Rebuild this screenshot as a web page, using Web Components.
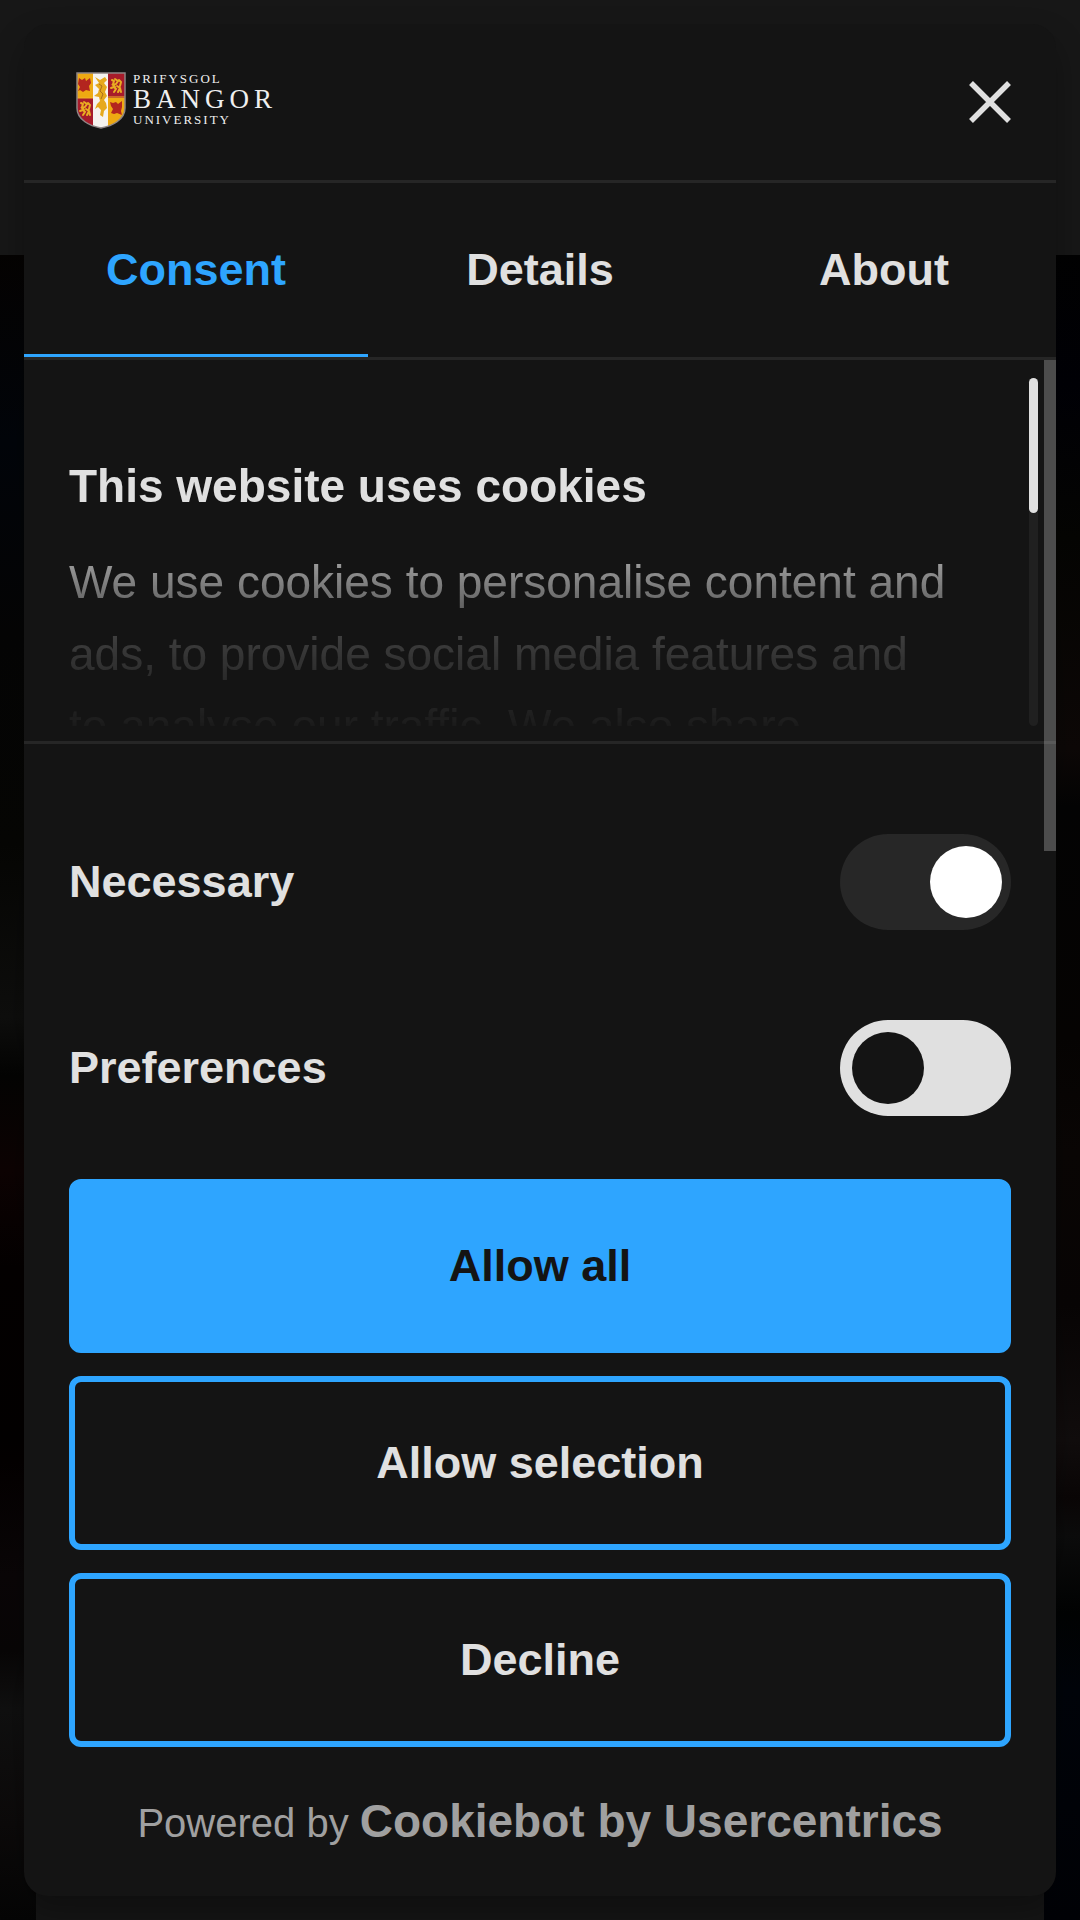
<!DOCTYPE html>
<html lang="en">
<head>
<meta charset="utf-8">
<meta name="viewport" content="width=device-width, initial-scale=1">
<title>Bangor University</title>
<style>
  html, body {
    margin: 0;
    height: 100%;
    background: #020202;
    font-family: "Liberation Sans", Arial, sans-serif;
    font-size: 45px;
    color: #e0e0e0;
  }
</style>
</head>
<body>
<page-backdrop>
  <consent-dialog>
    <consent-header slot="header"></consent-header>
    <consent-tabs slot="header"></consent-tabs>

    <consent-intro heading="This website uses cookies">We use cookies to personalise content and ads, to provide social media features and to analyse our traffic. We also share</consent-intro>
    <consent-options>
      <consent-switch label="Necessary" checked disabled></consent-switch>
      <consent-switch label="Preferences"></consent-switch>
    </consent-options>

    <consent-button slot="actions" primary>Allow all</consent-button>
    <consent-button slot="actions">Allow selection</consent-button>
    <consent-button slot="actions">Decline</consent-button>
    <powered-by slot="footer" href="#cookiebot" name="Cookiebot by Usercentrics"></powered-by>
  </consent-dialog>
</page-backdrop>

<script>
'use strict';

// dimmed page that lies under the dialog
class PageBackdrop extends HTMLElement {
  static get is() { return 'page-backdrop'; }
  constructor() {
    super();
    this.attachShadow({mode: 'open'});
    this.shadowRoot.innerHTML = `
      <style>
        :host {
          display: flex;
          flex-direction: column;
          box-sizing: border-box;
          min-height: 100vh;
          padding: 24px;
          background:
            linear-gradient(#171717, #171717) top / 100% 255px no-repeat,
            linear-gradient(#151515, #151515) bottom / calc(100% - 72px) 36px no-repeat,
            linear-gradient(#050302 13%, #02050a 23%, #050505 33%, #060604 44%, #0e0e0d 53%, #040403 56%, #0d0303 61%, #040101 66%, #030000 75%, #0a0607 82%, #080606 86%, #101010 89%, #0c0a0a 95%, #050505) left / 50% 100% no-repeat,
            linear-gradient(#020202 13%, #010106 20%, #050503 28%, #0d0807 39%, #040404 42%, #060403 54%, #0a0605 60%, #080505 68%, #110d0d 75%, #0a0606 78%, #0c0c0c 80%, #020303 84%, #01040a 88%, #010206) right / 50% 100% no-repeat;
        }
      </style>
      <slot></slot>
    `;
  }
}
customElements.define(PageBackdrop.is, PageBackdrop);

class ConsentDialog extends HTMLElement {
  static get is() { return 'consent-dialog'; }
  constructor() {
    super();
    this.attachShadow({mode: 'open'});
    this.shadowRoot.innerHTML = `
      <style>
        :host {
          display: flex;
          flex: 1;
          flex-direction: column;
          background: #141414;
          border-radius: 24px;
          box-shadow: 0 16px 32px rgba(0, 0, 0, 0.3);
          overflow: hidden;
        }
        main {
          position: relative;
          flex: 1;
        }
        .scrollbar {
          position: absolute;
          top: 0;
          right: 0;
          width: 12px;
          height: 60%;
          background: rgba(255, 255, 255, 0.24);
        }
        .actions {
          display: grid;
          gap: 23px;
          padding: 0 45px;
        }
      </style>
      <slot name="header"></slot>
      <main>
        <slot></slot>
        <div class="scrollbar"></div>
      </main>
      <div class="actions"><slot name="actions"></slot></div>
      <slot name="footer"></slot>
    `;
  }
  connectedCallback() {
    this.setAttribute('role', 'dialog');
    this.setAttribute('aria-modal', 'true');
  }
}
customElements.define(ConsentDialog.is, ConsentDialog);

class BangorLogo extends HTMLElement {
  static get is() { return 'bangor-logo'; }
  constructor() {
    super();
    this.attachShadow({mode: 'open'});
    this.shadowRoot.innerHTML = `
      <style>
        :host { display: block; }
        svg { display: block; }
        text {
          font-family: "Liberation Serif", "Times New Roman", serif;
          fill: #efefef;
        }
        .small { font-size: 13px; letter-spacing: 2px; }
        .large { font-size: 27px; letter-spacing: 5px; }
      </style>
      <svg width="204" height="60" viewBox="0 0 204 60">
        <defs>
          <clipPath id="shield"><path d="M1 1H49V36C49 48 36 54 25 56C14 54 1 48 1 36Z"/></clipPath>
          <g id="lions" fill="none" stroke-linecap="round">
            <path d="M2 2l2 1-1 3M5 1l3 2-2 3-3 1 2 2M9 2l2 2-1 4M1 10l3-1 2 2-2 3M7 8l3 2-2 4M10 10l1 4" stroke-width="2"/>
          </g>
        </defs>
        <g clip-path="url(#shield)">
          <path d="M0 0H17V26H0Z" fill="#eea912"/>
          <path d="M32 0H50V26H32Z" fill="#a71b2a"/>
          <path d="M0 26H17V60H0Z" fill="#a71b2a"/>
          <path d="M32 26H50V60H32Z" fill="#eea912"/>
          <path d="M17 0H32V60H17Z" fill="#f6f3ef"/>
          <path d="M3 6l3 2 3-2 1 3 4-3 1 5-2 3 1 5-4-1-3 2-3-2-2 1 2-4-2-3Z" fill="#b3251f"/>
          <path d="M34 30l3 1 3-1 2 2 4-3v6l-1 4 1 4-5-2-3 1-3-1 2-4-2-3Z" fill="#b3251f"/>
          <use href="#lions" x="34" y="6" stroke="#e9ac22"/>
          <use href="#lions" x="3" y="29" stroke="#e9ac22"/>
          <path d="M19 5l5 3 5-3 2 3-3 3 3 4-2 5 2 4-3 4 2 3 1 5-3 3-1 6-3-2 1-5-3-3-3 2 2-5 3-3-1-4-5-1 4-3 1-4-4-4 4-2Z" fill="#e6a91d"/>
          <path d="M23 12l3 2-2 5 3 3-2 5" stroke="#a9701b" fill="none"/>
          <path d="M0 26H17M32 25H50" stroke="#f0b429" stroke-width="1"/>
        </g>
        <path d="M1 1H49V36C49 48 36 54 25 56C14 54 1 48 1 36Z" fill="none" stroke="#8e8585" stroke-width="1.5"/>
        <text class="small" x="57" y="11">PRIFYSGOL</text>
        <text class="large" x="57" y="36">BANGOR</text>
        <text class="small" x="57" y="52">UNIVERSITY</text>
      </svg>
    `;
  }
}
customElements.define(BangorLogo.is, BangorLogo);

class ConsentHeader extends HTMLElement {
  static get is() { return 'consent-header'; }
  constructor() {
    super();
    this.attachShadow({mode: 'open'});
    this.shadowRoot.innerHTML = `
      <style>
        :host {
          display: flex;
          align-items: center;
          justify-content: space-between;
          height: 156px;
          padding: 0 45px 0 52px;
          border-bottom: 3px solid #262626;
        }
        button {
          padding: 0;
          border: 0;
          background: none;
          color: inherit;
          cursor: pointer;
        }
        button svg { display: block; }
      </style>
      <bangor-logo></bangor-logo>
      <button type="button" aria-label="Close">
        <svg width="42" height="42" viewBox="0 0 42 42" stroke="currentColor" stroke-width="5.5">
          <path d="M2 2L40 40M40 2L2 40"/>
        </svg>
      </button>
    `;
  }
}
customElements.define(ConsentHeader.is, ConsentHeader);

class ConsentTabs extends HTMLElement {
  static get is() { return 'consent-tabs'; }
  constructor() {
    super();
    this.attachShadow({mode: 'open'});
    this.shadowRoot.innerHTML = `
      <style>
        :host {
          display: grid;
          grid-template-columns: repeat(3, 1fr);
          border-bottom: 3px solid #262626;
        }
        button {
          height: 174px;
          padding: 3px 0 0;
          border: 0;
          border-bottom: 3px solid transparent;
          background: none;
          color: inherit;
          font: inherit;
          font-weight: bold;
          cursor: pointer;
        }
        button[aria-selected="true"] {
          color: #2ea5ff;
          border-color: #2ea5ff;
        }
      </style>
      <button type="button" role="tab" aria-selected="true">Consent</button>
      <button type="button" role="tab" aria-selected="false">Details</button>
      <button type="button" role="tab" aria-selected="false">About</button>
    `;
    this.tabs = [...this.shadowRoot.querySelectorAll('button')];
  }
  connectedCallback() {
    this.setAttribute('role', 'tablist');
    this.tabs.forEach(tab => tab.addEventListener('click', () => this.select(tab)));
  }
  select(tab) {
    this.tabs.forEach(t => t.setAttribute('aria-selected', t === tab));
  }
}
customElements.define(ConsentTabs.is, ConsentTabs);

class ConsentIntro extends HTMLElement {
  static get is() { return 'consent-intro'; }
  constructor() {
    super();
    this.attachShadow({mode: 'open'});
    this.shadowRoot.innerHTML = `
      <style>
        :host {
          display: grid;
          grid-template-columns: 1fr 9px;
          gap: 45px;
          padding: 18px 18px 15px 45px;
          border-bottom: 3px solid #262626;
          font-size: 46px;
          line-height: 72px;
        }
        /* text fades out towards the bottom edge */
        .text {
          height: 348px;
          box-sizing: border-box;
          padding: 72px 32px 0 0;
          overflow: hidden;
          -webkit-mask-image: linear-gradient(#000 40%, rgba(0, 0, 0, 0.64) 54%, rgba(0, 0, 0, 0.44) 63%, rgba(0, 0, 0, 0.2) 75%, rgba(0, 0, 0, 0.13) 84%, rgba(0, 0, 0, 0.07) 95%, rgba(0, 0, 0, 0.03));
          mask-image: linear-gradient(#000 40%, rgba(0, 0, 0, 0.64) 54%, rgba(0, 0, 0, 0.44) 63%, rgba(0, 0, 0, 0.2) 75%, rgba(0, 0, 0, 0.13) 84%, rgba(0, 0, 0, 0.07) 95%, rgba(0, 0, 0, 0.03));
        }
        h2 {
          margin: 0 0 24px;
          font-size: inherit;
        }
        p { margin: 0; }
        .track {
          border-radius: 5px;
          background: #202020;
        }
        .thumb {
          height: 135px;
          border-radius: 5px;
          background: #e0e0e0;
        }
      </style>
      <div class="text">
        <h2></h2>
        <p><slot></slot></p>
      </div>
      <div class="track"><div class="thumb"></div></div>
    `;
    this.shadowRoot.querySelector('h2').textContent = this.getAttribute('heading');
  }
}
customElements.define(ConsentIntro.is, ConsentIntro);

class ConsentOptions extends HTMLElement {
  static get is() { return 'consent-options'; }
  constructor() {
    super();
    this.attachShadow({mode: 'open'});
    this.shadowRoot.innerHTML = `
      <style>
        :host {
          display: grid;
          gap: 90px;
          padding: 90px 45px 45px;
        }
      </style>
      <slot></slot>
    `;
  }
}
customElements.define(ConsentOptions.is, ConsentOptions);

class ConsentSwitch extends HTMLElement {
  static get is() { return 'consent-switch'; }
  constructor() {
    super();
    this.attachShadow({mode: 'open'});
    this.shadowRoot.innerHTML = `
      <style>
        :host {
          display: flex;
          align-items: center;
          justify-content: space-between;
        }
        label { font-weight: bold; }
        input {
          appearance: none;
          display: flex;
          box-sizing: border-box;
          width: 171px;
          height: 96px;
          margin: 0;
          padding: 12px 9px 12px 12px;
          border-radius: 48px;
          background: #e0e0e0;
          cursor: pointer;
        }
        input::before {
          content: "";
          width: 72px;
          height: 72px;
          border-radius: 50%;
          background: #141414;
        }
        input:checked { justify-content: flex-end; background: #2ea5ff; }
        input:checked::before { background: #fff; }
        input:disabled { background: #272727; cursor: default; }
      </style>
      <label for="toggle"></label>
      <input id="toggle" type="checkbox">
    `;
    this.shadowRoot.querySelector('label').textContent = this.getAttribute('label');
    const input = this.shadowRoot.querySelector('input');
    input.checked = this.hasAttribute('checked');
    input.disabled = this.hasAttribute('disabled');
  }
}
customElements.define(ConsentSwitch.is, ConsentSwitch);

class ConsentButton extends HTMLElement {
  static get is() { return 'consent-button'; }
  constructor() {
    super();
    this.attachShadow({mode: 'open'});
    this.shadowRoot.innerHTML = `
      <style>
        :host { display: block; }
        button {
          display: block;
          width: 100%;
          height: 174px;
          border: 6px solid #2ea5ff;
          border-radius: 12px;
          background: #141414;
          color: inherit;
          font: inherit;
          font-weight: bold;
          cursor: pointer;
        }
        :host([primary]) button {
          background: #2ea5ff;
          color: #141414;
        }
      </style>
      <button type="button"><slot></slot></button>
    `;
  }
}
customElements.define(ConsentButton.is, ConsentButton);

class PoweredBy extends HTMLElement {
  static get is() { return 'powered-by'; }
  constructor() {
    super();
    this.attachShadow({mode: 'open'});
    this.shadowRoot.innerHTML = `
      <style>
        :host {
          display: block;
          padding: 40px 0 38px;
          font-size: 40px;
          line-height: 69px;
          text-align: center;
          color: #a0a0a0;
        }
        a {
          color: inherit;
          font-size: 46px;
          font-weight: bold;
          text-decoration: none;
        }
      </style>
      Powered by <a></a>
    `;
    const a = this.shadowRoot.querySelector('a');
    a.href = this.getAttribute('href');
    a.textContent = this.getAttribute('name');
  }
}
customElements.define(PoweredBy.is, PoweredBy);
</script>
</body>
</html>
